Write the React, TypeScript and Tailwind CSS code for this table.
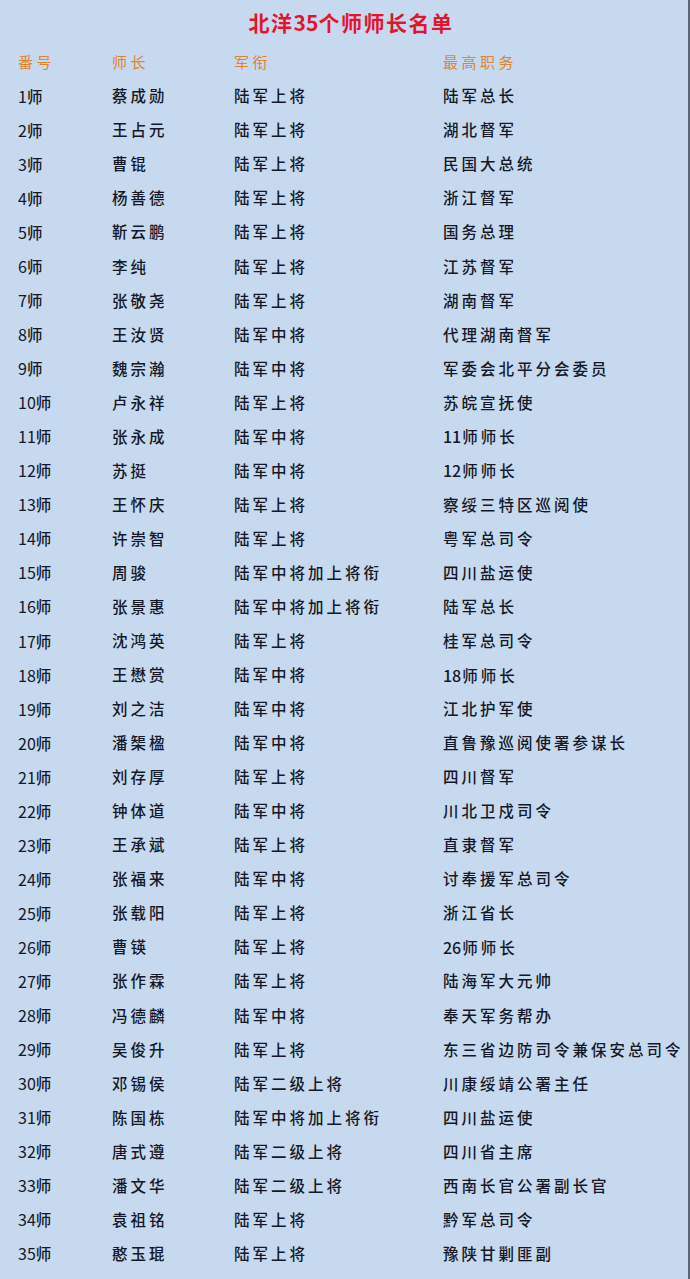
import React from "react";

const rows: [string, string, string, string][] = [
  ["1", "蔡成勋", "陆军上将", "陆军总长"],
  ["2", "王占元", "陆军上将", "湖北督军"],
  ["3", "曹锟", "陆军上将", "民国大总统"],
  ["4", "杨善德", "陆军上将", "浙江督军"],
  ["5", "靳云鹏", "陆军上将", "国务总理"],
  ["6", "李纯", "陆军上将", "江苏督军"],
  ["7", "张敬尧", "陆军上将", "湖南督军"],
  ["8", "王汝贤", "陆军中将", "代理湖南督军"],
  ["9", "魏宗瀚", "陆军中将", "军委会北平分会委员"],
  ["10", "卢永祥", "陆军上将", "苏皖宣抚使"],
  ["11", "张永成", "陆军中将", "11师师长"],
  ["12", "苏挺", "陆军中将", "12师师长"],
  ["13", "王怀庆", "陆军上将", "察绥三特区巡阅使"],
  ["14", "许崇智", "陆军上将", "粤军总司令"],
  ["15", "周骏", "陆军中将加上将衔", "四川盐运使"],
  ["16", "张景惠", "陆军中将加上将衔", "陆军总长"],
  ["17", "沈鸿英", "陆军上将", "桂军总司令"],
  ["18", "王懋赏", "陆军中将", "18师师长"],
  ["19", "刘之洁", "陆军中将", "江北护军使"],
  ["20", "潘榘楹", "陆军中将", "直鲁豫巡阅使署参谋长"],
  ["21", "刘存厚", "陆军上将", "四川督军"],
  ["22", "钟体道", "陆军中将", "川北卫戍司令"],
  ["23", "王承斌", "陆军上将", "直隶督军"],
  ["24", "张福来", "陆军中将", "讨奉援军总司令"],
  ["25", "张载阳", "陆军上将", "浙江省长"],
  ["26", "曹锳", "陆军上将", "26师师长"],
  ["27", "张作霖", "陆军上将", "陆海军大元帅"],
  ["28", "冯德麟", "陆军中将", "奉天军务帮办"],
  ["29", "吴俊升", "陆军上将", "东三省边防司令兼保安总司令"],
  ["30", "邓锡侯", "陆军二级上将", "川康绥靖公署主任"],
  ["31", "陈国栋", "陆军中将加上将衔", "四川盐运使"],
  ["32", "唐式遵", "陆军二级上将", "四川省主席"],
  ["33", "潘文华", "陆军二级上将", "西南长官公署副长官"],
  ["34", "袁祖铭", "陆军上将", "黔军总司令"],
  ["35", "憨玉琨", "陆军上将", "豫陕甘剿匪副"],
];

function T({ s }: { s: string }) {
  const parts = s.split(/(\d+)/).filter((p) => p.length > 0);
  return (
    <span className="whitespace-nowrap">
      {parts.map((p, i) =>
        /^\d+$/.test(p) ? (
          <span key={i} className="tracking-normal text-[16px] mr-[1px]">
            {p}
          </span>
        ) : (
          <span key={i} className="tracking-[3px]">
            {p}
          </span>
        )
      )}
    </span>
  );
}

export default function App() {
  return (
    <div
      className="w-[690px] min-h-[1279px] bg-[#c6d9ee] border-r-[2px] border-[#5b6477] text-[#141828]"
      style={{ fontFamily: '"Noto Sans CJK SC", "Noto Sans", sans-serif' }}
    >
      <div className="h-[45px] flex items-center justify-center pl-[14px]">
        <h1 className="text-[21px] font-bold text-[#e3142e] tracking-[1.5px] leading-none">
          北洋<span className="tracking-normal">35</span>个师师长名单
        </h1>
      </div>
      <div className="grid grid-cols-[94px_122px_209px_1fr] h-[34px] items-center pl-[18px] text-[15px] text-[#e2842f] tracking-[3.5px]">
        <div>番号</div>
        <div>师长</div>
        <div>军衔</div>
        <div>最高职务</div>
      </div>
      {rows.map((r) => (
        <div
          key={r[0]}
          className="grid grid-cols-[94px_122px_209px_1fr] h-[34.06px] items-center pl-[18px] text-[15.5px] leading-none font-medium"
        >
          <div className="whitespace-nowrap">
            <span className="text-[16px] font-normal">{r[0]}</span>
            <span>师</span>
          </div>
          <div>
            <T s={r[1]} />
          </div>
          <div>
            <T s={r[2]} />
          </div>
          <div>
            <T s={r[3]} />
          </div>
        </div>
      ))}
    </div>
  );
}
